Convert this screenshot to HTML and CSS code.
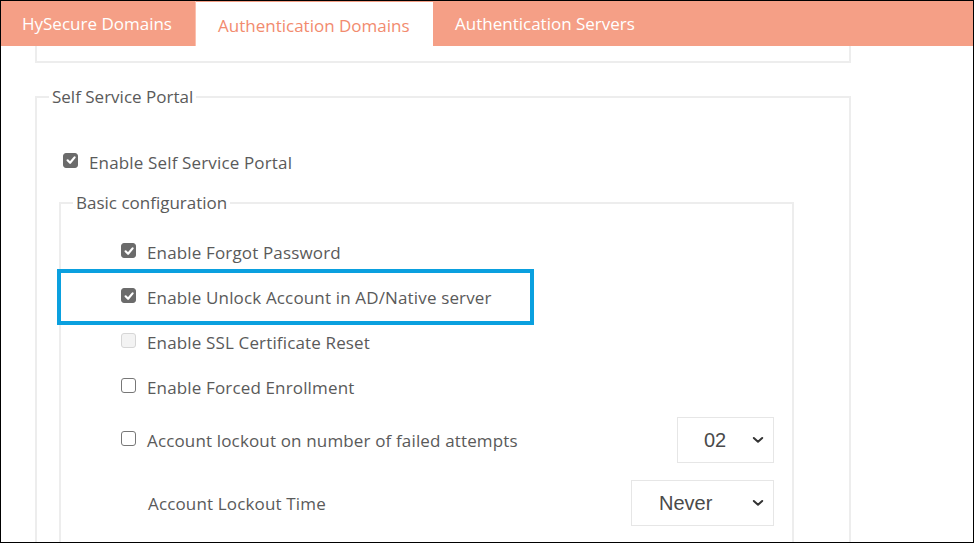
FILE: index.html
```html
<!DOCTYPE html>
<html>
<head>
<meta charset="utf-8">
<link rel="stylesheet" href="styles.css">
</head>
<body>
<div class="frame">
  <div class="tabs">
    <div class="tab">HySecure Domains</div>
    <div class="tab active">Authentication Domains</div>
    <div class="tab">Authentication Servers</div>
  </div>
  <div class="content">
    <div class="prev-box"></div>
    <fieldset class="portal">
      <legend>Self Service Portal</legend>
      <div class="portal-body">
        <div class="row top-row">
          <span class="cb checked"><svg viewBox="0 0 14 14"><path d="M3.6 7.3 L6.1 9.8 L10.6 4.4" /></svg></span>
          <span class="label">Enable Self Service Portal</span>
        </div>
        <fieldset class="basic">
          <legend>Basic configuration</legend>
          <div class="basic-body">
            <div class="row">
              <span class="cb checked"><svg viewBox="0 0 14 14"><path d="M3.6 7.3 L6.1 9.8 L10.6 4.4" /></svg></span>
              <span class="label">Enable Forgot Password</span>
            </div>
            <div class="row highlighted">
              <span class="cb checked"><svg viewBox="0 0 14 14"><path d="M3.6 7.3 L6.1 9.8 L10.6 4.4" /></svg></span>
              <span class="label">Enable Unlock Account in AD/Native server</span>
            </div>
            <div class="row">
              <span class="cb disabled"></span>
              <span class="label">Enable SSL Certificate Reset</span>
            </div>
            <div class="row">
              <span class="cb"></span>
              <span class="label">Enable Forced Enrollment</span>
            </div>
            <div class="row lockout">
              <span class="cb"></span>
              <span class="label grow">Account lockout on number of failed attempts</span>
              <div class="select small"><span class="val">02</span><svg class="chev" viewBox="0 0 12 8"><path d="M1.8 2 L6 5.8 L10.2 2"/></svg></div>
            </div>
            <div class="row time">
              <span class="label grow">Account Lockout Time</span>
              <div class="select wide"><span class="val">Never</span><svg class="chev" viewBox="0 0 12 8"><path d="M1.8 2 L6 5.8 L10.2 2"/></svg></div>
            </div>
          </div>
        </fieldset>
      </div>
    </fieldset>
  </div>
</div>
</body>
</html>
```

FILE: styles.css
```css
*, *::before, *::after { box-sizing: border-box; }
html, body { margin: 0; padding: 0; background: #fff; }
body { font-family: "Open Sans", "Noto Sans", sans-serif; color: #5a5a5a; }

.frame {
  width: 974px;
  height: 543px;
  border: 1px solid #000;
  overflow: hidden;
}

.tabs {
  display: flex;
  height: 45px;
  background: #f59f86;
}
.tab {
  padding: 0 22px;
  font-size: 17px;
  color: #fff;
  display: flex;
  align-items: center;
  height: 45px;
  white-space: nowrap;
}
.tab:first-child { width: 195px; border-right: 1px solid #fbc0ae; padding-left: 21px; }
.tab.active {
  background: #fff;
  color: #f28b6e;
  height: 46px;
  margin-top: 1px;
  width: 237px;
}

.content {
  padding-left: 34px;
}
.prev-box {
  width: 816px;
  height: 17px;
  border: 2px solid #ededed;
  border-top: none;
}

fieldset {
  margin: 0;
  border: 2px solid #ededed;
  padding: 0;
  min-width: 0;
}
legend {
  font-size: 17px;
  color: #5a5a5a;
  padding: 0 3px;
  margin-left: 12px;
  line-height: 24px;
}

.portal {
  width: 816px;
  margin-top: 22px;
  height: 600px;
}
.portal-body {
  padding: 38px 55px 0 22px;
}

.row {
  display: flex;
  align-items: center;
  height: 45px;
  font-size: 17px;
  letter-spacing: 0.15px;
  position: relative;
}
.top-row {
  height: 30px;
  padding-left: 4px;
  margin-bottom: 14px;
}
.cb {
  width: 15px;
  height: 15px;
  border-radius: 3px;
  border: 1.5px solid #777;
  background: #fff;
  margin-right: 11px;
  flex: none;
  display: flex;
  align-items: center;
  justify-content: center;
  margin-top: -4px;
}
.cb.checked {
  background: #6b6b6b;
  border-color: #6b6b6b;
}
.cb svg { width: 14px; height: 14px; flex: none; }
.cb svg path { fill: none; stroke: #fff; stroke-width: 2.2; stroke-linecap: round; stroke-linejoin: round; }
.cb.disabled {
  background: #f3f3f3;
  border-color: #d6d6d6;
}

.basic-body {
  padding: 15px 18px 120px 60px;
}

.highlighted::after {
  content: "";
  position: absolute;
  left: -64px;
  top: -6px;
  width: 477px;
  height: 56px;
  border: 4px solid #0aa0df;
}

.grow { flex: 1; }
.lockout { height: 46px; margin-top: 7px; }
.time { height: 46px; margin-top: 17px; padding-left: 27px; }

.select {
  height: 46px;
  border: 1px solid #e6e6e6;
  display: flex;
  align-items: center;
  justify-content: space-between;
  font-size: 20px;
  letter-spacing: 0;
  color: #4a4a4a;
  font-family: "Liberation Sans", Arial, sans-serif;
  flex: none;
}
.select.small { width: 97px; padding: 0 9px 0 26px; }
.select.wide { width: 143px; padding: 0 9px 0 27px; }
.chev { width: 12px; height: 8px; }
.chev path { fill: none; stroke: #333; stroke-width: 2; stroke-linecap: round; stroke-linejoin: round; }
```
